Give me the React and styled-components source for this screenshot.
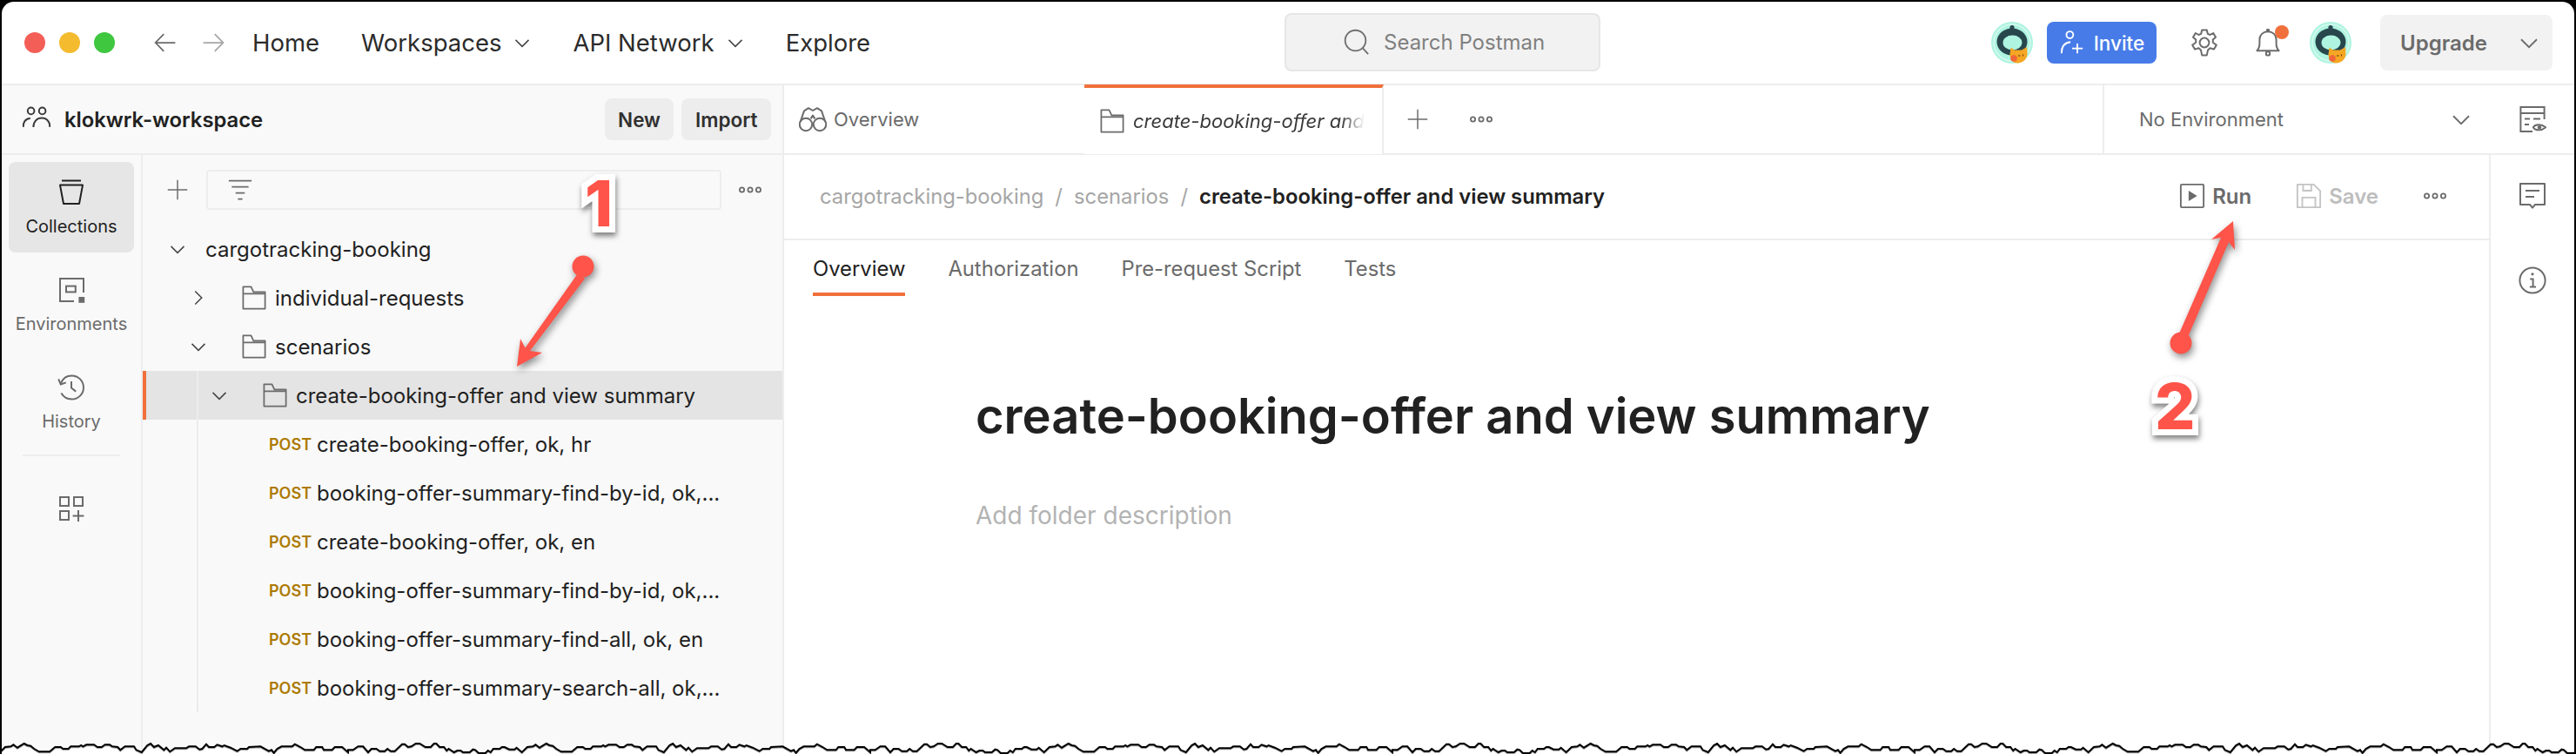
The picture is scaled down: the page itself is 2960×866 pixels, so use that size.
import React from "react";
import styled, { createGlobalStyle } from "styled-components";

const GlobalStyle = createGlobalStyle`
  html, body {
    margin: 0;
    padding: 0;
    background: #000;
  }
  * {
    box-sizing: border-box;
  }
`;

const BORDER = "#ededed";
const TEXT = "#212121";
const MUTED = "#6b6b6b";
const ORANGE = "#f0703c";

const Window = styled.div`
  position: relative;
  width: 2956px;
  height: 864px;
  margin: 2px 2px 0;
  border-radius: 14px 14px 0 0;
  background: #fff;
  overflow: hidden;
  font-family: Inter, "Liberation Sans", sans-serif;
  color: ${TEXT};
  display: flex;
  flex-direction: column;
`;

/* top bar */
const TopBar = styled.header`
  height: 96px;
  flex: none;
  display: flex;
  align-items: center;
  border-bottom: 2px solid ${BORDER};
`;

const TopLeft = styled.div`
  flex: 0 0 1474px;
  display: flex;
  align-items: center;
  padding-left: 26px;
`;

const Lights = styled.div`
  display: flex;
  gap: 16px;
  margin-right: 44px;
`;

const Light = styled.span`
  width: 24px;
  height: 24px;
  border-radius: 50%;
  background: ${(p) => p.$color};
`;

const History = styled.div`
  display: flex;
  gap: 27px;
  margin-right: 31px;
`;

const NavMenu = styled.nav`
  display: flex;
  align-items: center;
  gap: 48px;
`;

const NavItem = styled.span`
  display: flex;
  align-items: center;
  gap: 14px;
  font-size: 27.5px;
  color: #2b2b2b;
`;

const Search = styled.div`
  width: 363px;
  height: 67px;
  flex: none;
  margin-top: -2px;
  display: flex;
  align-items: center;
  gap: 16px;
  padding-left: 66px;
  background: #f2f2f2;
  border: 2px solid #e6e6e6;
  border-radius: 8px;
  font-size: 24px;
  color: #808080;
`;

const TopRight = styled.div`
  flex: 1;
  display: flex;
  align-items: center;
  justify-content: flex-end;
  padding-right: 25px;
`;

const AvatarSvg = styled.svg`
  width: 48px;
  height: 48px;
  flex: none;
  margin-left: ${(p) => p.$left || 0}px;
`;

const InviteButton = styled.div`
  width: 126px;
  height: 48px;
  margin-left: 16px;
  display: flex;
  align-items: center;
  justify-content: center;
  gap: 10px;
  background: #477be8;
  border-radius: 8px;
  color: #fff;
  font-size: 22.5px;
  font-weight: 500;
`;

const BellWrap = styled.div`
  position: relative;
  display: flex;
  margin-left: 41px;
`;

const BellDot = styled.span`
  position: absolute;
  right: -8px;
  top: -4px;
  width: 16px;
  height: 16px;
  border-radius: 50%;
  background: ${ORANGE};
`;

const GearWrap = styled.div`
  display: flex;
  margin-left: 39px;
`;

const UpgradeButton = styled.div`
  width: 198px;
  height: 64px;
  margin-left: 33px;
  display: flex;
  align-items: center;
  justify-content: space-between;
  padding: 0 15px 0 23px;
  background: #f2f2f2;
  border-radius: 8px;
  font-size: 24px;
  font-weight: 600;
  color: ${MUTED};
`;

/* body */
const Body = styled.div`
  flex: 1;
  display: flex;
  min-height: 0;
`;

const Sidebar = styled.aside`
  width: 899px;
  flex: none;
  display: flex;
  flex-direction: column;
  background: #f9f9f9;
  border-right: 2px solid ${BORDER};
`;

const SidebarHead = styled.div`
  height: 80px;
  flex: none;
  display: flex;
  align-items: center;
  padding: 0 13px 0 24px;
  border-bottom: 2px solid ${BORDER};
`;

const WorkspaceName = styled.span`
  margin-left: 16px;
  font-size: 23.8px;
  font-weight: 600;
  flex: 1;
`;

const HeadButton = styled.span`
  height: 48px;
  padding: 0 15.5px;
  margin-left: 9px;
  display: flex;
  align-items: center;
  background: #ededed;
  border-radius: 8px;
  font-size: 22.5px;
  font-weight: 600;
  color: #303030;
`;

const SidebarBody = styled.div`
  flex: 1;
  display: flex;
  min-height: 0;
`;

const Rail = styled.nav`
  width: 162px;
  flex: none;
  display: flex;
  flex-direction: column;
  align-items: center;
  gap: 8px;
  padding-top: 8px;
  border-right: 2px solid ${BORDER};
`;

const RailItem = styled.div`
  width: 144px;
  height: 104px;
  flex: none;
  display: flex;
  flex-direction: column;
  align-items: center;
  justify-content: center;
  gap: 11px;
  border-radius: 8px;
  font-size: 20px;
  color: ${(p) => (p.$active ? TEXT : MUTED)};
  background: ${(p) => (p.$active ? "#e6e6e6" : "transparent")};
`;

const RailDivider = styled.div`
  width: 112px;
  height: 2px;
  flex: none;
  background: ${BORDER};
`;

const RailApps = styled.div`
  display: flex;
  margin-top: 36px;
`;

const Tree = styled.div`
  flex: 1;
  min-width: 0;
`;

const TreeToolbar = styled.div`
  height: 80px;
  display: flex;
  align-items: center;
  padding-left: 28px;
`;

const FilterBox = styled.div`
  width: 592px;
  height: 46px;
  margin-left: 21px;
  margin-right: 19px;
  display: flex;
  align-items: center;
  padding-left: 23px;
  border: 2px solid ${BORDER};
  border-radius: 4px;
`;

const Row = styled.div`
  height: 56px;
  display: flex;
  align-items: center;
  padding-left: ${(p) => p.$indent}px;
  font-size: 24px;
  color: ${TEXT};
  background: ${(p) => (p.$selected ? "#e4e4e4" : "transparent")};
  box-shadow: ${(p) => (p.$selected ? `inset 4px 0 0 ${ORANGE}` : "none")};
`;

const RowName = styled.span`
  margin-left: 10px;
  white-space: nowrap;
`;

const RootName = styled.span`
  margin-left: 22px;
  white-space: nowrap;
`;

const FolderSlot = styled.span`
  display: flex;
  margin-left: 40px;
`;

const NestedGroup = styled.div`
  position: relative;

  &::before {
    content: "";
    position: absolute;
    left: 62px;
    top: 0;
    bottom: 0;
    width: 2px;
    background: #ececec;
  }
`;

const Method = styled.span`
  width: 55px;
  flex: none;
  font-size: 18px;
  font-weight: 600;
  color: #ad7a03;
`;

/* main */
const Main = styled.main`
  flex: 1;
  min-width: 0;
  display: flex;
  flex-direction: column;
`;

const TabBar = styled.div`
  height: 80px;
  flex: none;
  display: flex;
  align-items: center;
  border-bottom: 2px solid ${BORDER};
`;

const PlainTab = styled.div`
  width: 345px;
  display: flex;
  align-items: center;
  gap: 8px;
  padding-left: 17px;
  font-size: 22px;
  color: ${MUTED};
`;

const ActiveTab = styled.div`
  width: 344px;
  height: 80px;
  flex: none;
  display: flex;
  align-items: center;
  gap: 10px;
  padding: 0 20px 0 18px;
  background: #fff;
  border-top: 4px solid ${ORANGE};
  border-right: 2px solid ${BORDER};
  font-size: 22px;
  font-style: italic;
`;

const TabTitle = styled.span`
  flex: 1;
  min-width: 0;
  overflow: hidden;
  white-space: nowrap;
  color: #3a3a3a;
  mask-image: linear-gradient(to right, #000 90%, transparent 100%);
`;

const TabTool = styled.span`
  display: flex;
  margin-left: ${(p) => p.$left}px;
`;

const EnvSelect = styled.div`
  width: 446px;
  height: 78px;
  margin-left: auto;
  display: flex;
  align-items: center;
  justify-content: space-between;
  padding: 0 22px 0 40px;
  border-left: 2px solid ${BORDER};
  font-size: 22px;
  color: ${MUTED};
`;

const EnvEye = styled.div`
  width: 96px;
  flex: none;
  display: flex;
  justify-content: center;
`;

const Content = styled.div`
  flex: 1;
  display: flex;
  min-height: 0;
`;

const Workspace = styled.section`
  flex: 1;
  min-width: 0;
  border-right: 2px solid ${BORDER};
`;

const RightRail = styled.aside`
  width: 96px;
  flex: none;
  display: flex;
  flex-direction: column;
  align-items: center;
  gap: 65px;
  padding-top: 31px;
`;

const BreadcrumbBar = styled.div`
  height: 98px;
  display: flex;
  align-items: center;
  padding: 0 48px 2px 41px;
  border-bottom: 2px solid ${BORDER};
`;

const Crumb = styled.span`
  font-size: 23.8px;
  font-weight: ${(p) => (p.$current ? 600 : 400)};
  color: ${(p) => (p.$current ? TEXT : "#a6a6a6")};
`;

const CrumbSep = styled.span`
  margin: 0 13px;
  font-size: 24px;
  color: #a6a6a6;
`;

const Actions = styled.div`
  margin-left: auto;
  display: flex;
  align-items: center;
`;

const Action = styled.span`
  display: flex;
  align-items: center;
  gap: 8px;
  margin-right: ${(p) => p.$right}px;
  font-size: 24px;
  font-weight: 600;
  color: ${(p) => (p.$disabled ? "#bdbdbd" : MUTED)};
`;

const SubTabs = styled.div`
  height: 64px;
  display: flex;
  gap: 49px;
  padding-left: 33px;
`;

const SubTab = styled.span`
  position: relative;
  display: flex;
  align-items: center;
  font-size: 23.8px;
  color: ${(p) => (p.$active ? TEXT : MUTED)};

  &::after {
    content: "";
    display: ${(p) => (p.$active ? "block" : "none")};
    position: absolute;
    left: 0;
    right: 0;
    bottom: 0;
    height: 4px;
    background: ${ORANGE};
  }
`;

const Description = styled.div`
  padding: 104px 0 0 220px;
`;

const FolderTitle = styled.h1`
  margin: 0;
  font-size: 56px;
  line-height: 68px;
  font-weight: 600;
  white-space: nowrap;
`;

const Placeholder = styled.p`
  margin: 60px 0 0;
  font-size: 28px;
  line-height: 40px;
  color: #b3b3b3;
`;

/* annotations lying over the screenshot */
const Overlay = styled.svg`
  position: absolute;
  left: -2px;
  top: -2px;
  width: 2960px;
  height: 866px;
  pointer-events: none;
`;

const Arrow = styled.g`
  fill: #fe5449;
  filter: drop-shadow(2px 4px 4px rgba(0, 0, 0, 0.45));
`;

const Callout = styled.span`
  position: absolute;
  left: ${(p) => p.$x}px;
  top: ${(p) => p.$y}px;
  font-family: Inter, "Liberation Sans", sans-serif;
  font-size: 73px;
  line-height: 1;
  font-weight: 800;
  color: #fe5449;
  -webkit-text-stroke: 14px #fff;
  paint-order: stroke fill;
  filter: drop-shadow(1px 4px 3px rgba(0, 0, 0, 0.5));
`;

/* icons */
const Svg = styled.svg.attrs({ viewBox: "0 0 16 16", fill: "none" })`
  width: ${(p) => p.$size || 32}px;
  height: ${(p) => p.$size || 32}px;
  flex: none;
  stroke: ${(p) => p.$color || MUTED};
  stroke-width: ${(p) => p.$weight || 1};
`;

const Chevron = ({ dir = "down", size = 20, color = "#444" }) => (
  <Svg $size={size} $color={color} $weight={1.2}>
    <path d={dir === "down" ? "M2 5.5L8 11.5L14 5.5" : "M5 2L11 8L5 14"} />
  </Svg>
);

const BackArrow = ({ color }) => (
  <Svg $size={28} $color={color}>
    <path d="M14.5 8H1.8M7 2.3L1.5 8L7 13.7" />
  </Svg>
);

const ForwardArrow = ({ color }) => (
  <Svg $size={28} $color={color}>
    <path d="M1.5 8H14.2M9 2.3L14.5 8L9 13.7" />
  </Svg>
);

const SearchIcon = () => (
  <Svg $size={30} $color="#707070">
    <circle cx="7.2" cy="7.2" r="6.3" />
    <path d="M11.6 11.8L15 15.5" />
  </Svg>
);

const Plus = ({ size = 24 }) => (
  <Svg $size={size}>
    <path d="M8 0.5V15.5M0.5 8H15.5" />
  </Svg>
);

const Dots = ({ size = 28 }) => (
  <Svg $size={size} $weight={1}>
    <circle cx="2.6" cy="8" r="1.5" />
    <circle cx="8" cy="8" r="1.5" />
    <circle cx="13.4" cy="8" r="1.5" />
  </Svg>
);

const Folder = ({ size = 28 }) => (
  <Svg $size={size}>
    <path d="M0.8 15.2H15.2V4.2H7.6L6 0.8H0.8V15.2ZM0.8 5.4H15.2" strokeLinejoin="round" />
  </Svg>
);

const People = () => (
  <Svg $color="#3a3a3a">
    <circle cx="4.8" cy="3.2" r="1.9" />
    <circle cx="11.3" cy="3.2" r="1.9" />
    <path d="M0.3 12.5C0.3 9.5 2 7.7 4.4 7.4M6.2 12.5C6.2 9.3 8.2 7.3 11 7.3C13.8 7.3 15.7 9.3 15.7 12.5" />
  </Svg>
);

const CollectionsIcon = () => (
  <Svg $color="#212121">
    <path d="M2.5 1.2H13.5M1.5 3.8H14.5L12.5 14.5H3.5L1.5 3.8Z" strokeLinejoin="round" />
  </Svg>
);

const EnvironmentsIcon = () => (
  <Svg>
    <path d="M15 9.5V1.5H1.5V14.5H9.5" />
    <rect x="5" y="5.8" width="5.4" height="3.4" />
    <rect x="12.2" y="12" width="3.4" height="3.4" fill={MUTED} stroke="none" />
  </Svg>
);

const HistoryIcon = () => (
  <Svg>
    <path d="M2 5.6C3 3 5.3 1.2 8.2 1.2C12 1.2 15 4.2 15 8C15 11.8 12 14.8 8.2 14.8C5.6 14.8 3.4 13.4 2.2 11.3" />
    <path d="M0.6 3.2L1.9 6.2L4.9 5.2M8 4.5V8.3L10.6 10.3" />
  </Svg>
);

const AppsIcon = () => (
  <Svg>
    <rect x="1.5" y="1.5" width="5" height="5" />
    <rect x="9.5" y="1.5" width="5" height="5" />
    <rect x="1.5" y="9.5" width="5" height="5" />
    <path d="M12 9V15.5M8.8 12.2H15.2" />
  </Svg>
);

const FilterIcon = () => (
  <Svg $size={28}>
    <path d="M0.5 2H15.5M2.5 6H13.5M5 10H11M6.5 14H9.5" />
  </Svg>
);

const UserPlus = () => (
  <Svg $size={30} $color="#fff">
    <circle cx="6.6" cy="3.2" r="2.1" />
    <path d="M1.5 14.5C1.5 10.3 3.5 8 7 7.6M8 11.5H14.5M11.2 8.5V14.5" />
  </Svg>
);

const Gear = () => (
  <Svg>
    <circle cx="8" cy="8" r="2.7" />
    <path
      d="M6.6 0.8H9.4L9.9 2.9L11.3 3.5L13.1 2.5L14.5 4.9L12.9 6.3V7.9L14.9 9.4L13.5 11.8L11.3 11.1L10 12.3L9.4 15.2H6.6L6 12.3L4.7 11.1L2.5 11.8L1.1 9.4L3.1 7.9V6.3L1.5 4.9L2.9 2.5L4.7 3.5L6.1 2.9L6.6 0.8Z"
      strokeLinejoin="round"
    />
  </Svg>
);

const Bell = () => (
  <Svg>
    <path d="M1.7 12.6C3 11.4 3.2 10 3.2 8.4V6.2C3.2 3.6 5.2 1.6 8 1.6C10.8 1.6 12.8 3.6 12.8 6.2V8.4C12.8 10 13 11.4 14.3 12.6H1.7Z" strokeLinejoin="round" />
    <circle cx="8" cy="14.2" r="1.1" />
    <circle cx="8" cy="1" r="0.6" />
  </Svg>
);

const Binoculars = () => (
  <Svg>
    <circle cx="4" cy="11" r="3.6" />
    <circle cx="12" cy="11" r="3.6" />
    <path d="M0.8 9.5L3 3.2L5.5 1.6L8 3L10.5 1.6L13 3.2L15.2 9.5M6.8 7.7L8 5.8L9.2 7.7" strokeLinejoin="round" />
  </Svg>
);

const RunIcon = () => (
  <Svg $size={30}>
    <rect x="1" y="1" width="14" height="14" rx="0.6" />
    <path d="M5.8 4.8L11 8L5.8 11.2Z" fill={MUTED} stroke="none" />
  </Svg>
);

const SaveIcon = () => (
  <Svg $size={30} $color="#c4c4c4">
    <path d="M1 1H11L15 5V15H1V1Z" strokeLinejoin="round" />
    <path d="M4.5 1V4.8H9.5V1M4 15V9H12V15" />
  </Svg>
);

const EyeDoc = () => (
  <Svg>
    <path d="M8 15H1.2V1H14.8V8M1.2 4.5H14.8M3.5 7.8H6.5M8.5 7.8H12.5M3.5 11H6" />
    <path d="M8.4 12.6C9.6 10.8 13 10.6 15.6 12.6C13 14.8 9.6 14.6 8.4 12.6Z" />
    <circle cx="12" cy="12.6" r="1.1" fill={MUTED} stroke="none" />
  </Svg>
);

const CommentIcon = () => (
  <Svg>
    <path d="M1 1H15V13H9.5L8 14.8L6.5 13H1V1Z" strokeLinejoin="round" />
    <path d="M4 5H12M4 8.5H9" />
  </Svg>
);

const InfoIcon = () => (
  <Svg>
    <circle cx="8" cy="8" r="7.3" />
    <path d="M6.6 7.2H8.3V11.8M6.4 11.8H10" />
    <circle cx="8" cy="4.4" r="0.8" fill={MUTED} stroke="none" />
  </Svg>
);

const Avatar = ({ left }) => (
  <AvatarSvg viewBox="0 0 48 48" $left={left}>
    <circle cx="24" cy="24" r="24" fill="#aef4e0" />
    <circle cx="24" cy="24" r="21" fill="none" stroke="#d6f9ef" strokeWidth="1.5" />
    <circle cx="24" cy="6.5" r="2.6" fill="#27474d" />
    <ellipse cx="24" cy="23" rx="17.5" ry="15.5" fill="#27474d" />
    <ellipse cx="24.5" cy="24" rx="11" ry="8.5" fill="#aef4e0" />
    <path d="M22 34L22.5 29.5L27 32.5H35L41 29L41.5 36C42 42 37 47.5 30 47.5C24 47.5 20 41 22 34Z" fill="#f5a623" />
    <circle cx="26" cy="42" r="3.8" fill="#f0663a" />
    <path d="M31 39H33.5M36.5 37.5V39.5" stroke="#5b3a10" strokeWidth="1" />
  </AvatarSvg>
);

// one traced stretch of the torn edge, repeated along the bottom
const TEAR = [
  [0, 244], [15, 244], [30, 232], [45, 232], [60, 252], [70, 240], [85, 240], [95, 248], [110, 248], [118, 240],
  [128, 248], [140, 248], [162, 224], [170, 224], [180, 234], [190, 232], [203, 222], [215, 222], [232, 234],
  [248, 234], [258, 222], [265, 222], [275, 234], [288, 234], [296, 246], [302, 240], [318, 252], [328, 246],
  [338, 246], [345, 252], [365, 252], [375, 242], [382, 244], [392, 255], [412, 255], [420, 246], [428, 252],
  [436, 240], [455, 240], [462, 234], [470, 234], [484, 242], [500, 242], [506, 236], [522, 252], [538, 234],
  [555, 232], [563, 226], [575, 236], [595, 222], [605, 228], [615, 230], [625, 240], [640, 250], [672, 250],
  [688, 234], [705, 234], [712, 240], [728, 240], [735, 232], [760, 232], [766, 228], [772, 232], [782, 226],
  [805, 226], [815, 234], [828, 234], [838, 226], [852, 226], [860, 232], [876, 234], [884, 244], [898, 232],
  [925, 232], [932, 244], [948, 252], [965, 228], [975, 222], [985, 234], [998, 228], [1015, 244], [1022, 236],
  [1033, 250], [1048, 238], [1082, 238], [1090, 232], [1110, 232], [1122, 242], [1130, 240], [1142, 224],
  [1150, 234], [1166, 234], [1175, 226], [1190, 232], [1196, 228], [1215, 236], [1235, 248], [1245, 240],
  [1265, 240], [1270, 234], [1305, 232], [1330, 248], [1338, 244], [1345, 254], [1355, 240], [1368, 232],
  [1400, 232], [1408, 224], [1425, 234], [1438, 244], [1465, 244], [1472, 234], [1490, 234], [1495, 244],
  [1520, 244], [1528, 234], [1550, 234], [1568, 252],
];

const tearLine = () => {
  const points = [];
  for (let start = -200; start < 2960; start += 600) {
    TEAR.forEach(([x, y]) => {
      points.push(`${(start + x / 2.6133).toFixed(1)} ${(780 + y / 3).toFixed(1)}`);
    });
  }
  return "M" + points.join("L");
};

const Annotations = () => {
  const line = tearLine();
  return (
    <Overlay viewBox="0 0 2960 866">
      <path d={`${line}L2960 866L-200 866Z`} fill="#fff" />
      <path d={line} fill="none" stroke="#a0a0a0" strokeWidth="2" transform="translate(0 1)" />
      <path d={line} fill="none" stroke="#000" strokeWidth="2" />
      <Arrow>
        <circle cx="670" cy="306" r="12.5" />
        <path d="M594 421L598 389L603.5 399.5L664 314L672 320L609 403L623 405Z" />
      </Arrow>
      <Arrow>
        <circle cx="2506" cy="394" r="12.5" />
        <path d="M2566 254L2568 287L2561 278L2511 394L2501 390L2552 273L2541 275Z" />
      </Arrow>
    </Overlay>
  );
};

const requests = [
  "create-booking-offer, ok, hr",
  "booking-offer-summary-find-by-id, ok,...",
  "create-booking-offer, ok, en",
  "booking-offer-summary-find-by-id, ok,...",
  "booking-offer-summary-find-all, ok, en",
  "booking-offer-summary-search-all, ok,...",
];

const App = () => {
  return (
    <Window>
      <GlobalStyle />
      <TopBar>
        <TopLeft>
          <Lights>
            <Light $color="#f35f57" />
            <Light $color="#f4bb2f" />
            <Light $color="#3ec73f" />
          </Lights>
          <History>
            <BackArrow color="#6b6b6b" />
            <ForwardArrow color="#a6a6a6" />
          </History>
          <NavMenu>
            <NavItem>Home</NavItem>
            <NavItem>
              Workspaces
              <Chevron />
            </NavItem>
            <NavItem>
              API Network
              <Chevron />
            </NavItem>
            <NavItem>Explore</NavItem>
          </NavMenu>
        </TopLeft>
        <Search>
          <SearchIcon />
          Search Postman
        </Search>
        <TopRight>
          <Avatar />
          <InviteButton>
            <UserPlus />
            Invite
          </InviteButton>
          <GearWrap>
            <Gear />
          </GearWrap>
          <BellWrap>
            <Bell />
            <BellDot />
          </BellWrap>
          <Avatar left={32} />
          <UpgradeButton>
            Upgrade
            <Chevron size={24} color="#6b6b6b" />
          </UpgradeButton>
        </TopRight>
      </TopBar>

      <Body>
        <Sidebar>
          <SidebarHead>
            <People />
            <WorkspaceName>klokwrk-workspace</WorkspaceName>
            <HeadButton>New</HeadButton>
            <HeadButton>Import</HeadButton>
          </SidebarHead>
          <SidebarBody>
            <Rail>
              <RailItem $active>
                <CollectionsIcon />
                Collections
              </RailItem>
              <RailItem>
                <EnvironmentsIcon />
                Environments
              </RailItem>
              <RailItem>
                <HistoryIcon />
                History
              </RailItem>
              <RailDivider />
              <RailApps>
                <AppsIcon />
              </RailApps>
            </Rail>
            <Tree>
              <TreeToolbar>
                <Plus />
                <FilterBox>
                  <FilterIcon />
                </FilterBox>
                <Dots />
              </TreeToolbar>
              <Row $indent={30}>
                <Chevron />
                <RootName>cargotracking-booking</RootName>
              </Row>
              <Row $indent={54}>
                <Chevron dir="right" />
                <FolderSlot>
                  <Folder />
                </FolderSlot>
                <RowName>individual-requests</RowName>
              </Row>
              <Row $indent={54}>
                <Chevron />
                <FolderSlot>
                  <Folder />
                </FolderSlot>
                <RowName>scenarios</RowName>
              </Row>
              <NestedGroup>
                <Row $indent={78} $selected>
                  <Chevron />
                  <FolderSlot>
                    <Folder />
                  </FolderSlot>
                  <RowName>create-booking-offer and view summary</RowName>
                </Row>
                {requests.map((name, i) => (
                  <Row $indent={145} key={i}>
                    <Method>POST</Method>
                    {name}
                  </Row>
                ))}
              </NestedGroup>
            </Tree>
          </SidebarBody>
        </Sidebar>

        <Main>
          <TabBar>
            <PlainTab>
              <Binoculars />
              Overview
            </PlainTab>
            <ActiveTab>
              <Folder />
              <TabTitle>create-booking-offer and view summary</TabTitle>
            </ActiveTab>
            <TabTool $left={27}>
              <Plus />
            </TabTool>
            <TabTool $left={47}>
              <Dots />
            </TabTool>
            <EnvSelect>
              No Environment
              <Chevron size={24} color="#6b6b6b" />
            </EnvSelect>
            <EnvEye>
              <EyeDoc />
            </EnvEye>
          </TabBar>
          <Content>
            <Workspace>
              <BreadcrumbBar>
                <Crumb>cargotracking-booking</Crumb>
                <CrumbSep>/</CrumbSep>
                <Crumb>scenarios</Crumb>
                <CrumbSep>/</CrumbSep>
                <Crumb $current>create-booking-offer and view summary</Crumb>
                <Actions>
                  <Action $right={51}>
                    <RunIcon />
                    Run
                  </Action>
                  <Action $right={51} $disabled>
                    <SaveIcon />
                    Save
                  </Action>
                  <Dots />
                </Actions>
              </BreadcrumbBar>
              <SubTabs>
                <SubTab $active>Overview</SubTab>
                <SubTab>Authorization</SubTab>
                <SubTab>Pre-request Script</SubTab>
                <SubTab>Tests</SubTab>
              </SubTabs>
              <Description>
                <FolderTitle>create-booking-offer and view summary</FolderTitle>
                <Placeholder>Add folder description</Placeholder>
              </Description>
            </Workspace>
            <RightRail>
              <CommentIcon />
              <InfoIcon />
            </RightRail>
          </Content>
        </Main>
      </Body>

      <Annotations />
      <Callout $x={670} $y={195}>1</Callout>
      <Callout $x={2474} $y={428}>2</Callout>
    </Window>
  );
};

export default App;
